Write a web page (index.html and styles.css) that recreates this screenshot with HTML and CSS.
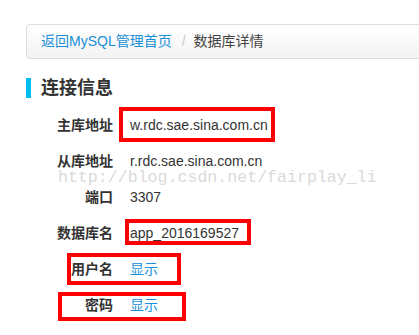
FILE: index.html
```html
<!DOCTYPE html>
<html lang="zh-CN">
<head>
    <meta charset="UTF-8">
    <meta name="viewport" content="width=device-width, initial-scale=1.0">
    <title>数据库详情</title>
    <link rel="stylesheet" href="styles.css">
</head>
<body>
    <div class="page">
        <ul class="breadcrumb">
            <li><a href="#">返回MySQL管理首页</a></li>
            <li class="divider">/</li>
            <li class="active">数据库详情</li>
        </ul>

        <h3 class="section-title">连接信息</h3>

        <div class="info-list">
            <div class="info-row">
                <span class="info-label">主库地址</span>
                <span class="info-value">w.rdc.sae.sina.com.cn</span>
            </div>
            <div class="info-row">
                <span class="info-label">从库地址</span>
                <span class="info-value">r.rdc.sae.sina.com.cn</span>
            </div>
            <div class="info-row">
                <span class="info-label">端口</span>
                <span class="info-value">3307</span>
            </div>
            <div class="info-row">
                <span class="info-label">数据库名</span>
                <span class="info-value">app_2016169527</span>
            </div>
            <div class="info-row">
                <span class="info-label">用户名</span>
                <span class="info-value"><a href="#">显示</a></span>
            </div>
            <div class="info-row">
                <span class="info-label">密码</span>
                <span class="info-value"><a href="#">显示</a></span>
            </div>
        </div>

        <!-- annotation overlay -->
        <div class="watermark">http://blog.csdn.net/fairplay_li</div>
        <div class="mark mark-master"></div>
        <div class="mark mark-dbname"></div>
        <div class="mark mark-user"></div>
        <div class="mark mark-pass"></div>
    </div>
</body>
</html>
```

FILE: styles.css
```css
html, body {
    margin: 0;
    padding: 0;
    background: #fff;
    overflow: hidden;
}
body {
    font-family: "Liberation Sans", Arial, "Noto Sans CJK SC", sans-serif;
    font-size: 14px;
    color: #333;
}
a {
    color: #1a8fd8;
    text-decoration: none;
}
.page {
    position: relative;
    padding: 24px 0 0 26px;
    height: 311px;
}
.breadcrumb {
    display: flex;
    list-style: none;
    margin: 0 -40px 0 0;
    padding: 7px 14px;
    line-height: 19px;
    border: 1px solid #dcdcdc;
    border-radius: 4px;
    background: linear-gradient(#fff, #f3f3f3);
    box-shadow: 0 1px 0 #fff inset;
}
.breadcrumb .divider {
    padding: 0 8px 0 10px;
    color: #ccc;
}
.breadcrumb .active {
    color: #444;
}
.section-title {
    margin: 19px 0 0;
    padding-left: 10px;
    border-left: 5px solid #00bdf2;
    font-size: 18px;
    line-height: 20px;
    font-weight: bold;
    color: #333;
}
.info-list {
    margin-top: 9px;
}
.info-row {
    display: flex;
    gap: 17px;
    padding: 8px 0;
    line-height: 20px;
}
.info-label {
    width: 87px;
    text-align: right;
    font-weight: bold;
    color: #333;
}
.info-value {
    color: #333;
}
.watermark {
    position: absolute;
    left: 58px;
    top: 168px;
    font-family: "Liberation Mono", "Courier New", monospace;
    font-size: 16.6px;
    line-height: 20px;
    color: #dadada;
    white-space: nowrap;
}
.mark {
    position: absolute;
    border: 4px solid #f00;
    box-sizing: border-box;
}
.mark-master {
    left: 119px;
    top: 107px;
    width: 156px;
    height: 35px;
}
.mark-dbname {
    left: 125px;
    top: 219px;
    width: 126px;
    height: 26px;
}
.mark-user {
    left: 67px;
    top: 253px;
    width: 114px;
    height: 32px;
}
.mark-pass {
    left: 58px;
    top: 292px;
    width: 128px;
    height: 29px;
}
```
